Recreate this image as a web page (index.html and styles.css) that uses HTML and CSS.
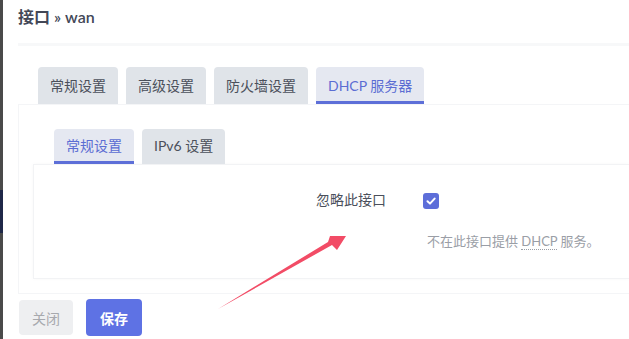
FILE: index.html
```html
<!DOCTYPE html>
<html lang="zh-CN">
<head>
    <meta charset="UTF-8">
    <meta name="viewport" content="width=device-width, initial-scale=1.0">
    <title>接口 » wan</title>
    <link rel="stylesheet" href="styles.css">
</head>
<body>
    <div class="backdrop-edge"></div>
    <div class="modal">
        <div class="modal-header">
            <h3>接口 » wan</h3>
        </div>

        <ul class="tabs">
            <li class="tab">常规设置</li>
            <li class="tab">高级设置</li>
            <li class="tab">防火墙设置</li>
            <li class="tab active">DHCP 服务器</li>
        </ul>

        <div class="panel">
            <ul class="tabs subtabs">
                <li class="tab active">常规设置</li>
                <li class="tab">IPv6 设置</li>
            </ul>
            <div class="section">
                <div class="row">
                    <label class="row-label" for="ignore">忽略此接口</label>
                    <div class="row-field">
                        <span class="checkbox" id="ignore">
                            <svg width="10" height="10" viewBox="0 0 10 10"><path d="M1.5 5.2 L4 7.6 L8.6 2.6" fill="none" stroke="#fff" stroke-width="2" stroke-linecap="round" stroke-linejoin="round"/></svg>
                        </span>
                        <div class="desc">不在此接口提供 <abbr>DHCP</abbr> 服务。</div>
                    </div>
                </div>
            </div>
        </div>

        <div class="actions">
            <button class="btn">关闭</button>
            <button class="btn primary">保存</button>
        </div>
    </div>

    <!-- annotation arrow drawn over the screenshot -->
    <svg class="arrow" width="629" height="339" viewBox="0 0 629 339">
        <polygon points="218,309 328,242 330,236 346,236 337,250 332,245" fill="#f24c66"/>
    </svg>
</body>
</html>
```

FILE: styles.css
```css
body {
    margin: 0;
    height: 339px;
    overflow: hidden;
    display: flex;
    position: relative;
    background: #fff;
    font-family: "Lato", "Noto Sans CJK SC", sans-serif;
    color: #4b505b;
}
.backdrop-edge {
    width: 3px;
    flex: none;
    background: linear-gradient(to bottom, #4a4a4a 0 190px, #1f2848 190px 233px, #4a4a4a 233px);
}
.modal {
    flex: 1;
    min-width: 0;
    padding-left: 15px;
}
.modal-header {
    height: 43px;
    border-bottom: 3px solid #f7f8f9;
}
.modal-header h3 {
    margin: 0;
    padding-top: 7px;
    font-size: 16px;
    line-height: 20px;
    font-weight: 600;
    color: #434857;
}
.tabs {
    display: flex;
    gap: 8px;
    list-style: none;
    margin: 21px 0 0;
    padding: 0 0 0 20px;
}
.tab {
    height: 37px;
    line-height: 37px;
    padding: 0 12px;
    background: #e0e4e9;
    border-radius: 4px 4px 0 0;
    font-size: 14px;
    color: #4b505b;
}
.tab.active {
    background: #e5e8f1;
    color: #5b6dd3;
    box-shadow: inset 0 -3px 0 #5d6fd8;
}
.panel {
    border: 1px solid #f4f5f7;
    border-right: none;
    padding: 24px 0 14px 14px;
}
.subtabs {
    margin: 0;
    padding-left: 21px;
}
.subtabs .tab {
    height: 35px;
    line-height: 33px;
}
.section {
    border: 1px solid #f2f3f5;
    border-right: none;
    box-shadow: 0 0 4px rgba(0,0,0,0.03);
    padding: 25px 0 27px;
}
.row {
    display: flex;
    align-items: flex-start;
}
.row-label {
    width: 352px;
    flex: none;
    text-align: right;
    font-size: 14px;
    line-height: 20px;
    color: #4b505b;
}
.row-field {
    margin-left: 37px;
}
.checkbox {
    display: flex;
    align-items: center;
    justify-content: center;
    width: 16px;
    height: 16px;
    margin-top: 3px;
    border-radius: 3px;
    background: #5d6ed9;
}
.desc {
    margin-top: 22px;
    padding-left: 4px;
    font-size: 13px;
    line-height: 20px;
    color: #9a9ea6;
    white-space: nowrap;
}
.desc abbr {
    text-decoration: none;
    border-bottom: 1px dotted #9a9ea6;
}
.actions {
    display: flex;
    align-items: center;
    gap: 13px;
    margin-top: 5px;
    padding-left: 1px;
}
.btn {
    height: 35px;
    padding: 0 13px;
    border: none;
    border-radius: 4px;
    font-family: inherit;
    font-size: 14px;
    background: #eeeff1;
    color: #a7a9ae;
}
.btn.primary {
    height: 37px;
    padding: 0 14px;
    background: #5e72e4;
    color: #fff;
    font-weight: 600;
}
.arrow {
    position: absolute;
    left: 0;
    top: 0;
    pointer-events: none;
}
```
